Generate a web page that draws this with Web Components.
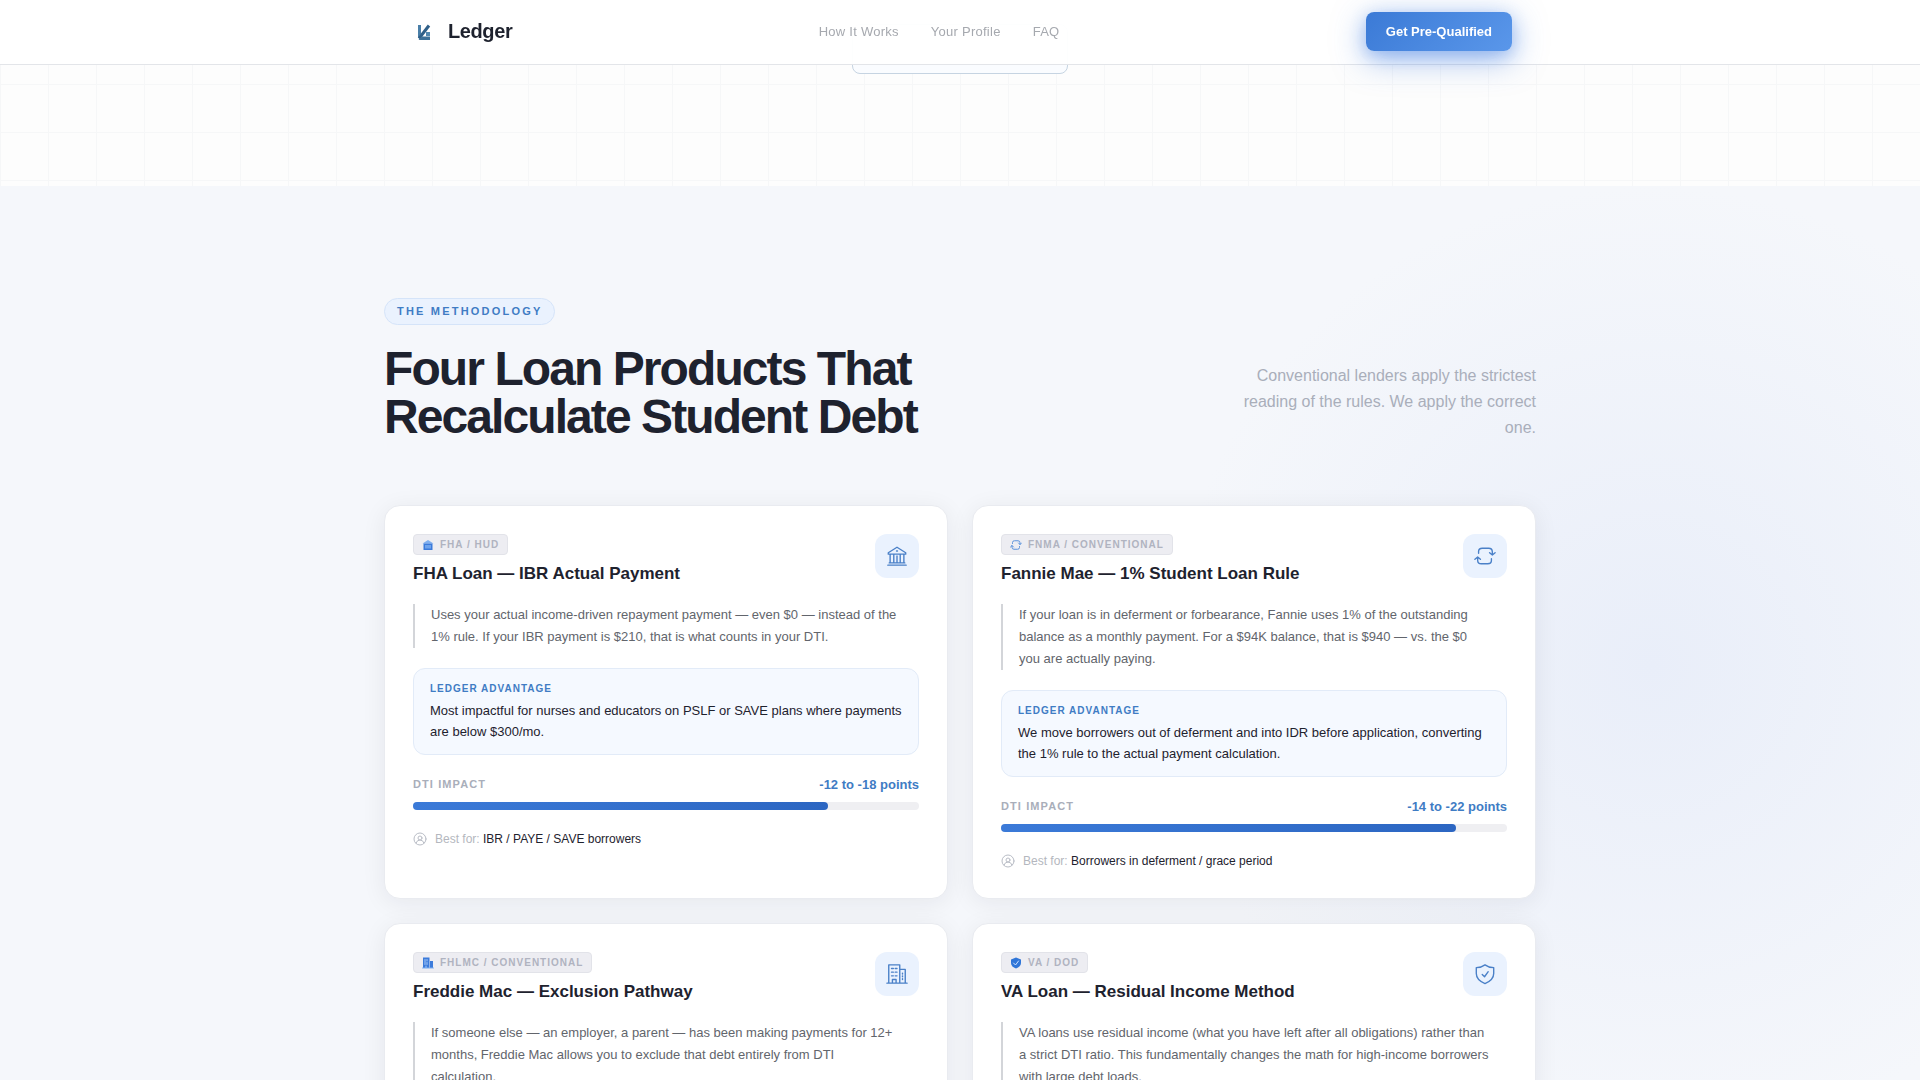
<!DOCTYPE html>
<html lang="en">
<head>
<meta charset="UTF-8">
<meta name="viewport" content="width=device-width, initial-scale=1">
<title>Ledger</title>
<style>
  body {
    margin: 0;
    font-family: "Liberation Sans", Arial, sans-serif;
    background: #f5f7fb;
    color: #1e222e;
    overflow-x: hidden;
    --blue: #3f7cc4;
    --ink: #1e222e;
    --muted: #a9aeba;
    --body: #62656c;
  }
</style>
</head>
<body>

<ledger-nav>
  <a href="#methodology">How It Works</a>
  <a href="#profile">Your Profile</a>
  <a href="#faq">FAQ</a>
</ledger-nav>

<ledger-hero></ledger-hero>

<ledger-methodology id="methodology">
  <span slot="badge">The Methodology</span>
  <span slot="title">Four Loan Products That<br>Recalculate Student Debt</span>
  <span slot="lead">Conventional lenders apply the strictest reading of the rules. We apply the correct one.</span>

  <loan-card icon="bank" agency="FHA / HUD" name="FHA Loan — IBR Actual Payment" impact="-12 to -18 points" level="82" best="IBR / PAYE / SAVE borrowers">
    Uses your actual income-driven repayment payment — even $0 — instead of the<br>
    1% rule. If your IBR payment is $210, that is what counts in your DTI.
    <span slot="advantage">Most impactful for nurses and educators on PSLF or SAVE plans where payments are below $300/mo.</span>
  </loan-card>

  <loan-card icon="repeat" agency="FNMA / Conventional" name="Fannie Mae — 1% Student Loan Rule" impact="-14 to -22 points" level="90" best="Borrowers in deferment / grace period">
    If your loan is in deferment or forbearance, Fannie uses 1% of the outstanding<br>
    balance as a monthly payment. For a $94K balance, that is $940 — vs. the $0<br>
    you are actually paying.
    <span slot="advantage">We move borrowers out of deferment and into IDR before application, converting the 1% rule to the actual payment calculation.</span>
  </loan-card>

  <loan-card icon="building" agency="FHLMC / Conventional" name="Freddie Mac — Exclusion Pathway">
    If someone else — an employer, a parent — has been making payments for 12+<br>
    months, Freddie Mac allows you to exclude that debt entirely from DTI<br>
    calculation.
  </loan-card>

  <loan-card icon="shield" agency="VA / DOD" name="VA Loan — Residual Income Method">
    VA loans use residual income (what you have left after all obligations) rather than<br>
    a strict DTI ratio. This fundamentally changes the math for high-income borrowers<br>
    with large debt loads.
  </loan-card>
</ledger-methodology>

<script>
// line icons for the tile, solid ones for the agency tag
const ICONS = {
  bank: {
    line: '<path d="M2.500 8.500 12 2.500l9.500 6v1.500h-19zM2 22h20M3.500 19.500h17M4.500 10v9.500M8.500 10v9.500M12 12v7.500M15.500 10v9.500M19.500 10v9.500"/><path d="M11.500 6.500h1"/>',
    solid: '<path d="M1 9 12 2l11 7z" fill="#7fb0f0" stroke="none"/><path d="M3 9h18v13H3z" fill="#3b7bdb" stroke="none"/><path d="M6 12h12v7H6z" fill="#6ea3ec" stroke="none"/>'
  },
  repeat: {
    line: '<path d="M5 9V7q0-3.500 4-3.500h7q4 0 4 4V11M17 8.500l3 2.500 3-2.500M19 15v2q0 3.500-4 3.500H8q-4 0-4-4V13M1 15.500 4 13l3 2.500"/>',
    solid: '<path d="M5 9V7q0-3.500 4-3.500h7q4 0 4 4V11M17 8l3 3 3-3M19 15v2q0 3.500-4 3.500H8q-4 0-4-4V13M1 16l3-3 3 3" stroke-width="2"/>'
  },
  building: {
    line: '<path d="M1 22h22M3 22V2h12v20M15 7h6v15M7 22v-4h4v4"/><path d="M6 6h2M10 6h2M6 10h2M10 10h2M6 14h2M10 14h2M18 11v1M18 14v1M18 17v1"/>',
    solid: '<path d="M2 1h13v21H2zM16 8h6v14h-6z" fill="#3b7bdb" stroke="none"/><path d="M6 5v10M10 5v3M10 11v4M8 18v4" stroke="#a9cbf8" stroke-width="2"/><path d="M1 22h22" stroke="#7fb0f0" stroke-width="2"/>'
  },
  shield: {
    line: '<path d="M12 2q4 3 9.500 3v6.500c0 5-3.500 8.500-9.500 11-6-2.500-9.500-6-9.500-11V5Q8 5 12 2z"/><path d="m9 12.500 2.500 2.500 4-5.500"/>',
    solid: '<path d="M12 1 22 5v7c0 5-4 9-10 11C6 21 2 17 2 12V5z" fill="#3076d8" stroke="none"/><path d="m7 12 4 4 6-8" stroke="#cfe2ff" stroke-width="2"/>'
  }
};

class LedgerNav extends HTMLElement {
  constructor() {
    super();
    this.attachShadow({ mode: 'open' });
  }

  connectedCallback() {
    this.shadowRoot.innerHTML = `
      <style>
        :host {
          display: block;
          position: fixed;
          inset: 0 0 auto;
          z-index: 10;
          background: rgba(255,255,255,0.97);
          border-bottom: 1px solid #e3e5e9;
        }

        .inner {
          display: flex;
          justify-content: space-between;
          align-items: center;
          box-sizing: border-box;
          max-width: 1152px;
          height: 64px;
          margin: 0 auto;
          padding: 0 24px 1px;
        }

        .brand {
          display: flex;
          align-items: center;
          gap: 8px;
          color: var(--ink);
          font-size: 20px;
          font-weight: 700;
          letter-spacing: -0.02em;
          text-decoration: none;
        }

        nav {
          display: flex;
          gap: 32px;
        }

        ::slotted(a) {
          color: #a6a9af;
          font-size: 13px;
          letter-spacing: 0.02em;
          text-decoration: none;
        }

        button {
          height: 39px;
          padding: 0 20px;
          border: 0;
          border-radius: 8px;
          background: linear-gradient(135deg, #3b7ad6, #5a97ea);
          box-shadow: 0 8px 32px rgba(59,122,224,0.5), 0 4px 16px rgba(59,122,224,0.3);
          color: #fff;
          font: 700 13px "Liberation Sans", Arial, sans-serif;
        }
      </style>

      <div class="inner">
        <a class="brand" href="#">
          <svg width="32" height="32" viewBox="0 0 32 32" aria-hidden="true">
            <path d="M10 9h3v9l-3 4z" fill="#4a7fa8"/>
            <path d="m11 22.500 10-13" stroke="#2f5f88" stroke-width="3"/>
            <path d="M14 20.500h8V24H10.500z" fill="#3d7098"/>
            <path d="M18 16h4v4h-4z" fill="#5288b0"/>
          </svg>
          Ledger
        </a>
        <nav aria-label="Main"><slot></slot></nav>
        <button type="button">Get Pre-Qualified</button>
      </div>
    `;
  }
}

class LedgerHero extends HTMLElement {
  constructor() {
    super();
    this.attachShadow({ mode: 'open' });
  }

  connectedCallback() {
    this.shadowRoot.innerHTML = `
      <style>
        :host {
          display: flex;
          justify-content: center;
          padding: 24px 24px 112px;
          background:
            linear-gradient(90deg, #f6f7f8 1px, transparent 1px) 0 0 / 48px 48px,
            linear-gradient(#f6f7f8 1px, transparent 1px) 0 -12px / 48px 48px,
            #fdfdfd;
        }

        button {
          width: 216px;
          height: 50px;
          border: 1px solid #c6d4e2;
          border-radius: 8px;
          background: #fafcff;
        }
      </style>
      <button type="button" aria-label="See how it works"></button>
    `;
  }
}

class LedgerMethodology extends HTMLElement {
  constructor() {
    super();
    this.attachShadow({ mode: 'open' });
  }

  connectedCallback() {
    this.shadowRoot.innerHTML = `
      <style>
        :host {
          display: block;
          padding: 112px 24px;
          background:
            radial-gradient(circle 480px at 86% 480px, #e9eef9, transparent),
            #f5f7fb;
        }

        .wrap {
          max-width: 1152px;
          margin: 0 auto;
        }

        header {
          display: flex;
          justify-content: space-between;
          align-items: flex-end;
          margin-bottom: 64px;
        }

        .badge {
          display: inline-block;
          padding: 0 12px;
          border: 1px solid #d5e4f9;
          border-radius: 16px;
          background: #eaf2fe;
          color: var(--blue);
          font-size: 11px;
          font-weight: 700;
          line-height: 25px;
          letter-spacing: 0.2em;
          text-transform: uppercase;
        }

        h2 {
          margin: 20px 0 0;
          color: var(--ink);
          font-size: 48px;
          line-height: 48px;
          letter-spacing: -0.04em;
        }

        .lead {
          max-width: 320px;
          margin: 0;
          color: var(--muted);
          font-size: 16px;
          line-height: 26px;
          text-align: right;
        }

        .grid {
          display: grid;
          grid-template-columns: repeat(2, 1fr);
          gap: 24px;
        }
      </style>

      <div class="wrap">
        <header>
          <div>
            <div class="badge"><slot name="badge"></slot></div>
            <h2><slot name="title"></slot></h2>
          </div>
          <p class="lead"><slot name="lead"></slot></p>
        </header>
        <div class="grid"><slot></slot></div>
      </div>
    `;
  }
}

class LoanCard extends HTMLElement {
  constructor() {
    super();
    this.attachShadow({ mode: 'open' });
  }

  connectedCallback() {
    const icon = ICONS[this.getAttribute('icon')];
    const agency = this.getAttribute('agency');
    const name = this.getAttribute('name');
    const impact = this.getAttribute('impact');
    const level = this.getAttribute('level');
    const best = this.getAttribute('best');

    const details = impact ? `
      <div class="advantage">
        <h4>Ledger Advantage</h4>
        <p><slot name="advantage"></slot></p>
      </div>

      <div class="impact"><span>DTI Impact</span><strong>${impact}</strong></div>
      <div class="track"><div class="fill" style="width: ${level}%"></div></div>

      <div class="best">
        <svg width="14" height="14" viewBox="0 0 14 14" fill="none" stroke="#b9bdc6" aria-hidden="true">
          <circle cx="7" cy="7" r="6"/><circle cx="7" cy="6" r="2"/><path d="M3 11q1-3 4-3t4 3"/>
        </svg>
        <span>Best for: <b>${best}</b></span>
      </div>
    ` : '';

    this.shadowRoot.innerHTML = `
      <style>
        :host {
          display: block;
          padding: 28px;
          border: 1px solid #e9ebf0;
          border-radius: 16px;
          background: #fff;
          box-shadow: 0 4px 24px rgba(29,33,45,0.07);
        }

        .head {
          display: flex;
          justify-content: space-between;
          align-items: flex-start;
          margin-bottom: 20px;
        }

        .tag {
          display: inline-flex;
          align-items: center;
          gap: 6px;
          box-sizing: border-box;
          height: 21px;
          padding: 0 8px;
          border: 1px solid #e2e3e9;
          border-radius: 4px;
          background: #ededf2;
          color: #b0b3c0;
          font-size: 10px;
          font-weight: 700;
          letter-spacing: 0.1em;
          text-transform: uppercase;
        }

        svg {
          flex: none;
          stroke-linecap: round;
          stroke-linejoin: round;
        }

        h3 {
          margin: 8px 0 0;
          color: var(--ink);
          font-size: 17px;
          line-height: 21px;
        }

        .tile {
          display: grid;
          place-items: center;
          width: 44px;
          height: 44px;
          border-radius: 12px;
          background: #eaf2fe;
        }

        blockquote {
          margin: 0 0 20px;
          padding-left: 16px;
          border-left: 2px solid #d3d5d9;
          color: var(--body);
          font-size: 13px;
          line-height: 22px;
        }

        .advantage {
          margin-bottom: 20px;
          padding: 12px 16px;
          border: 1px solid #e2ebf8;
          border-radius: 12px;
          background: #f5f9ff;
        }

        h4 {
          margin: 0 0 4px;
          color: var(--blue);
          font-size: 10px;
          line-height: 15px;
          letter-spacing: 0.1em;
          text-transform: uppercase;
        }

        .advantage p {
          margin: 0;
          color: var(--ink);
          font-size: 13px;
          line-height: 21px;
        }

        .impact {
          display: flex;
          justify-content: space-between;
          align-items: center;
          margin-bottom: 8px;
          color: var(--muted);
          font-size: 11px;
          font-weight: 700;
          line-height: 19px;
          letter-spacing: 0.1em;
          text-transform: uppercase;
        }

        .impact strong {
          color: var(--blue);
          font-size: 13px;
          letter-spacing: 0;
          text-transform: none;
        }

        .track {
          height: 8px;
          border-radius: 4px;
          background: #efeff2;
        }

        .fill {
          height: 8px;
          border-radius: 4px;
          background: linear-gradient(90deg, #3b7ad8, #2c66c2);
        }

        .best {
          display: flex;
          align-items: center;
          gap: 8px;
          margin-top: 20px;
          color: #b4b7be;
          font-size: 12px;
          line-height: 18px;
        }

        .best b {
          color: var(--ink);
          font-weight: 400;
        }
      </style>

      <div class="head">
        <div>
          <div class="tag">
            <svg width="12" height="12" viewBox="0 0 24 24" fill="none" stroke="#5b93dc" aria-hidden="true">${icon.solid}</svg>
            ${agency}
          </div>
          <h3>${name}</h3>
        </div>
        <div class="tile">
          <svg width="22" height="22" viewBox="0 0 24 24" fill="none" stroke="#4a80c8" stroke-width="1.5" aria-hidden="true">${icon.line}</svg>
        </div>
      </div>

      <blockquote><slot></slot></blockquote>
      ${details}
    `;
  }
}

customElements.define('ledger-nav', LedgerNav);
customElements.define('ledger-hero', LedgerHero);
customElements.define('ledger-methodology', LedgerMethodology);
customElements.define('loan-card', LoanCard);
</script>
</body>
</html>
